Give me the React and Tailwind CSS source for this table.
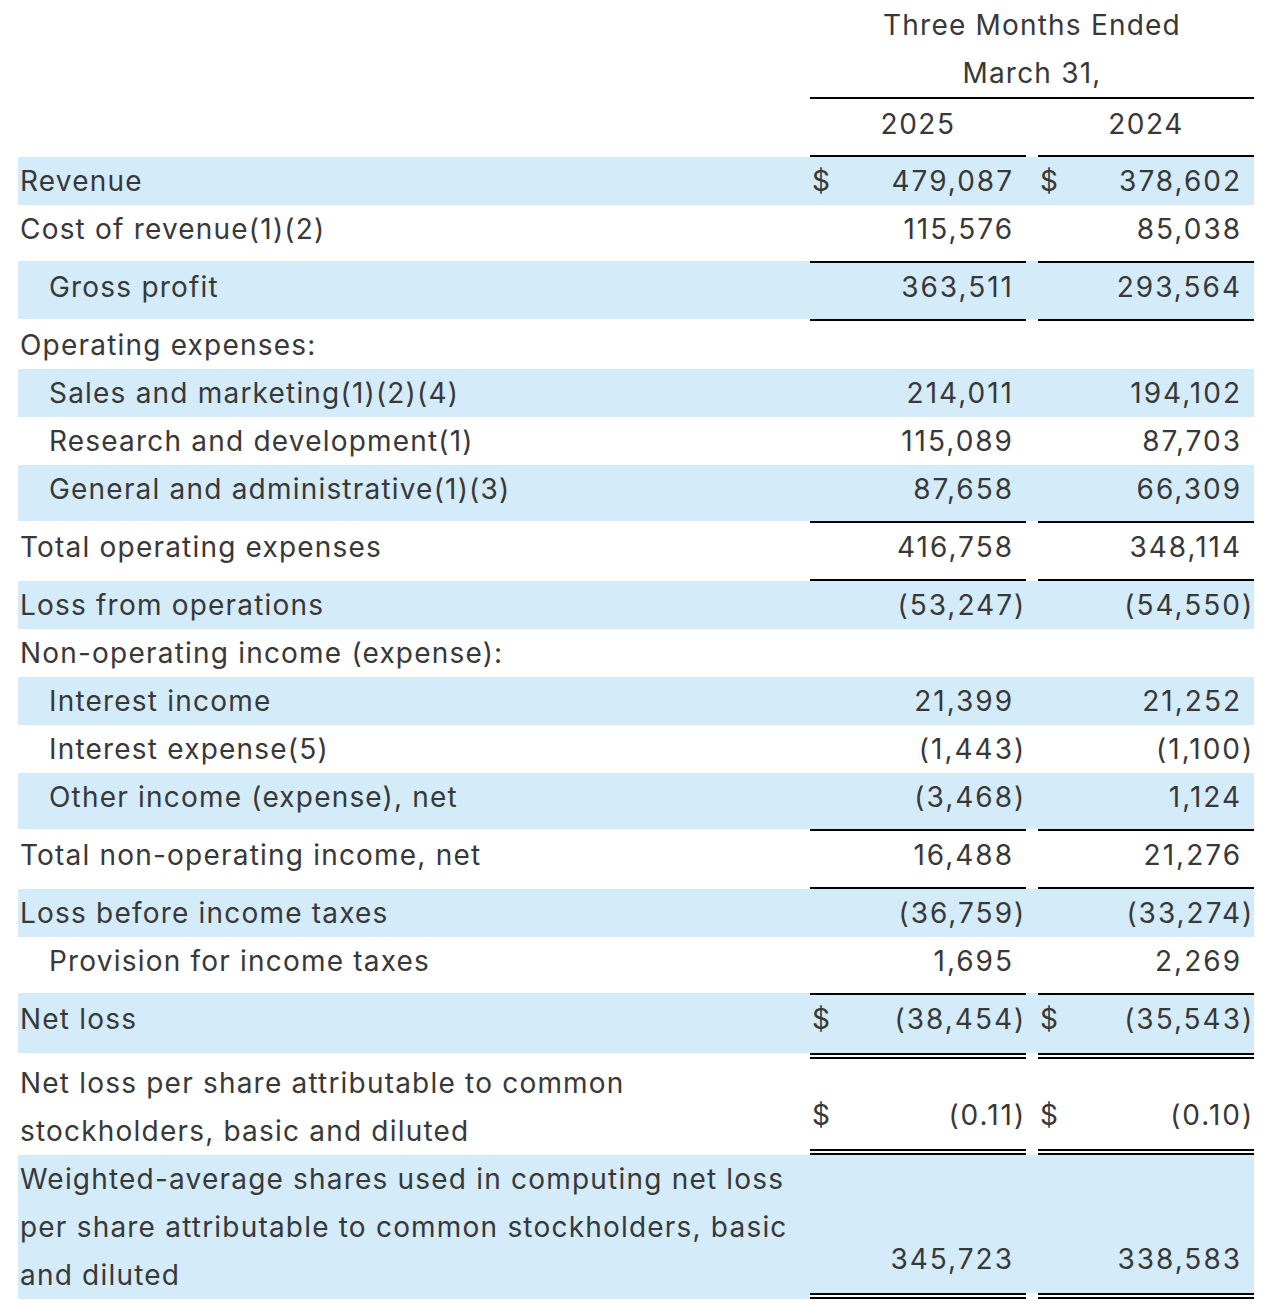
const rows = [
  { label: 'Revenue', v1: '479,087', v2: '378,602', dollar: true, blue: true },
  { label: 'Cost of revenue(1)(2)', v1: '115,576', v2: '85,038', pb: 8 },
  { label: 'Gross profit', indent: true, v1: '363,511', v2: '293,564', blue: true, bt: true, pb: 8, bb: 's' },
  { label: 'Operating expenses:' },
  { label: 'Sales and marketing(1)(2)(4)', indent: true, v1: '214,011', v2: '194,102', blue: true },
  { label: 'Research and development(1)', indent: true, v1: '115,089', v2: '87,703' },
  { label: 'General and administrative(1)(3)', indent: true, v1: '87,658', v2: '66,309', blue: true, pb: 8 },
  { label: 'Total operating expenses', v1: '416,758', v2: '348,114', bt: true, pb: 8, bb: 's' },
  { label: 'Loss from operations', v1: '(53,247)', v2: '(54,550)', blue: true },
  { label: 'Non-operating income (expense):' },
  { label: 'Interest income', indent: true, v1: '21,399', v2: '21,252', blue: true },
  { label: 'Interest expense(5)', indent: true, v1: '(1,443)', v2: '(1,100)' },
  { label: 'Other income (expense), net', indent: true, v1: '(3,468)', v2: '1,124', blue: true, pb: 8 },
  { label: 'Total non-operating income, net', v1: '16,488', v2: '21,276', bt: true, pb: 8, bb: 's' },
  { label: 'Loss before income taxes', v1: '(36,759)', v2: '(33,274)', blue: true },
  { label: 'Provision for income taxes', indent: true, v1: '1,695', v2: '2,269', pb: 8 },
  { label: 'Net loss', v1: '(38,454)', v2: '(35,543)', dollar: true, blue: true, bt: true, pb: 10, bb: 'd' },
  {
    label: ['Net loss per share attributable to common', 'stockholders, basic and diluted'],
    v1: '(0.11)', v2: '(0.10)', dollar: true, pb: 10, bb: 'd', multi: true,
  },
  {
    label: ['Weighted-average shares used in computing net loss', 'per share attributable to common stockholders, basic', 'and diluted'],
    v1: '345,723', v2: '338,583', blue: true, pb: 10, bb: 'd', multi: true,
  },
];

function Amount({ value, dollar }) {
  const neg = value && value.endsWith(')');
  const body = neg ? value.slice(0, -1) : value;
  return (
    <div className="flex items-center h-[48px] pl-[2px]">
      <span className="w-[20px] tracking-normal">{dollar ? '$' : ''}</span>
      <span className="flex-1 text-right whitespace-nowrap tracking-[2px]">{body}</span>
      <span className="w-[12px] text-left tracking-normal">{neg ? ')' : ''}</span>
    </div>
  );
}

function ValueCell({ row, value }) {
  const cls = [
    'w-[216px] flex flex-col justify-end bg-clip-padding border-black',
    row.blue ? 'bg-[#d4ebfa]' : '',
    row.bt ? 'border-t-2' : '',
    row.bb === 's' ? 'border-b-2' : '',
    row.bb === 'd' ? 'border-b-[6px] border-double' : '',
    row.pb === 8 ? 'pb-2' : '',
    row.pb === 10 ? 'pb-[10px]' : '',
  ].join(' ');
  return (
    <div className={cls}>
      {value !== undefined && <Amount value={value} dollar={row.dollar} />}
    </div>
  );
}

function Row({ row }) {
  const bg = row.blue ? 'bg-[#d4ebfa]' : '';
  // label side: no border, so padding/margin stand in for the value cells' borders
  const labelCls = [
    'w-[792px] leading-[48px] tracking-[1.2px]',
    bg,
    row.indent ? 'pl-[31px]' : 'pl-[2px]',
    row.bt ? 'pt-[2px]' : '',
    !row.multi && row.pb === 8 ? 'pb-2' : '',
    !row.multi && row.pb === 10 ? 'pb-[10px]' : '',
    !row.multi && row.bb === 's' ? 'mb-[2px]' : '',
    !row.multi && row.bb === 'd' ? 'mb-[6px]' : '',
  ].join(' ');
  const gapCls = [
    'w-[12px]',
    bg,
    row.bb === 's' ? 'mb-[2px]' : '',
    row.bb === 'd' ? 'mb-[6px]' : '',
  ].join(' ');
  return (
    <div className="flex items-stretch">
      <div className={labelCls}>
        {Array.isArray(row.label)
          ? row.label.map(l => <div key={l} className="whitespace-nowrap">{l}</div>)
          : row.label}
      </div>
      <ValueCell row={row} value={row.v1} />
      <div className={gapCls} />
      <ValueCell row={row} value={row.v2} />
    </div>
  );
}

export default function App() {
  return (
    <div className="min-h-screen bg-white pl-[18px] pr-[16px] text-[28px] text-[#383838] font-['Inter',sans-serif]">
      {/* Column header */}
      <div className="flex">
        <div className="w-[792px]" />
        <div className="w-[444px] pt-[1px] border-b-2 border-black text-center leading-[48px] tracking-[1.2px]">
          <div>Three Months Ended</div>
          <div>March 31,</div>
        </div>
      </div>
      <div className="flex">
        <div className="w-[792px]" />
        <div className="w-[216px] pt-[1px] pb-[7px] border-b-2 border-black text-center leading-[48px] tracking-[1.5px]">2025</div>
        <div className="w-[12px]" />
        <div className="w-[216px] pt-[1px] pb-[7px] border-b-2 border-black text-center leading-[48px] tracking-[1.5px]">2024</div>
      </div>

      {rows.map(r => (
        <Row key={Array.isArray(r.label) ? r.label[0] : r.label} row={r} />
      ))}
    </div>
  );
}
